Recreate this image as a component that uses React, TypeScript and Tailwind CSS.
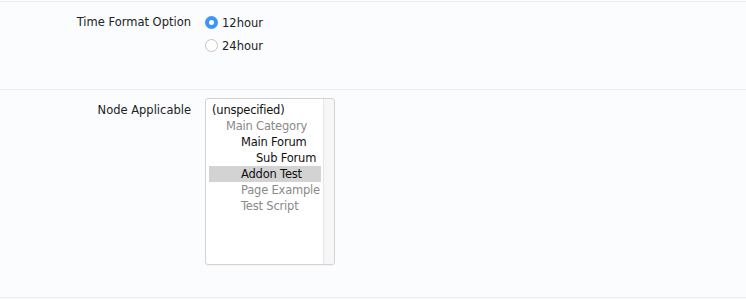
import React from "react"

const nodes = [
  { label: "(unspecified)", indent: 0, tone: "dark" },
  { label: "Main Category", indent: 1, tone: "muted" },
  { label: "Main Forum", indent: 2, tone: "dark" },
  { label: "Sub Forum", indent: 3, tone: "dark" },
  { label: "Addon Test", indent: 2, tone: "dark", selected: true },
  { label: "Page Example", indent: 2, tone: "muted" },
  { label: "Test Script", indent: 2, tone: "muted" },
]

const indentClass = ["pl-[3px]", "pl-[17px]", "pl-[32px]", "pl-[47px]"]

function Radio({ checked, label }: { checked?: boolean; label: string }) {
  return (
    <label className="flex items-center h-[23px] text-[#222]">
      {checked ? (
        <span className="w-[13px] h-[13px] rounded-full bg-[#3d95f5] flex items-center justify-center">
          <span className="w-[5px] h-[5px] rounded-full bg-white" />
        </span>
      ) : (
        <span className="w-[13px] h-[13px] rounded-full border border-[#c4c4c4] bg-white" />
      )}
      <span className="ml-[4px]">{label}</span>
    </label>
  )
}

export default function App() {
  return (
    <div className="w-[746px] h-[300px] bg-[#fafcfe] text-[11.5px] leading-[16px] font-['DejaVu_Sans',sans-serif] overflow-hidden">
      <div className="h-px mt-px bg-[#e3eef5]" />

      <div className="grid grid-cols-[191px_1fr] gap-x-[14px] h-[87px] pt-[9px]">
        <div className="text-right text-[#222] pt-[3px]">Time Format Option</div>
        <div>
          <Radio checked label="12hour" />
          <Radio label="24hour" />
        </div>
      </div>

      <div className="h-px bg-[#e3eef5]" />

      <div className="grid grid-cols-[191px_1fr] gap-x-[14px] h-[207px] pt-[8px]">
        <div className="text-right text-[#222] pt-[4px]">Node Applicable</div>
        <div>
          <div className="w-[130px] h-[167px] flex rounded-[3px] border border-[#d3d3d3] bg-white shadow-[0_1px_1px_rgba(0,0,0,0.04)]">
            <div className="flex-1 min-w-0 pt-[3px] pl-[3px]">
              {nodes.map((n) => (
                <div
                  key={n.label}
                  className={`h-[16px] whitespace-nowrap overflow-hidden tracking-[-0.2px] ${indentClass[n.indent]} ${
                    n.selected ? "bg-[#d3d3d3]" : ""
                  } ${n.tone === "muted" ? "text-[#8a8a8a]" : "text-[#111]"}`}
                >
                  {n.label}
                </div>
              ))}
            </div>
            <div className="w-[11px] ml-[2px] bg-[#f6f6f6] border-l border-[#e6e6e6] rounded-r-[3px]" />
          </div>
        </div>
      </div>

      <div className="h-px bg-[#e3eef5]" />
    </div>
  )
}
